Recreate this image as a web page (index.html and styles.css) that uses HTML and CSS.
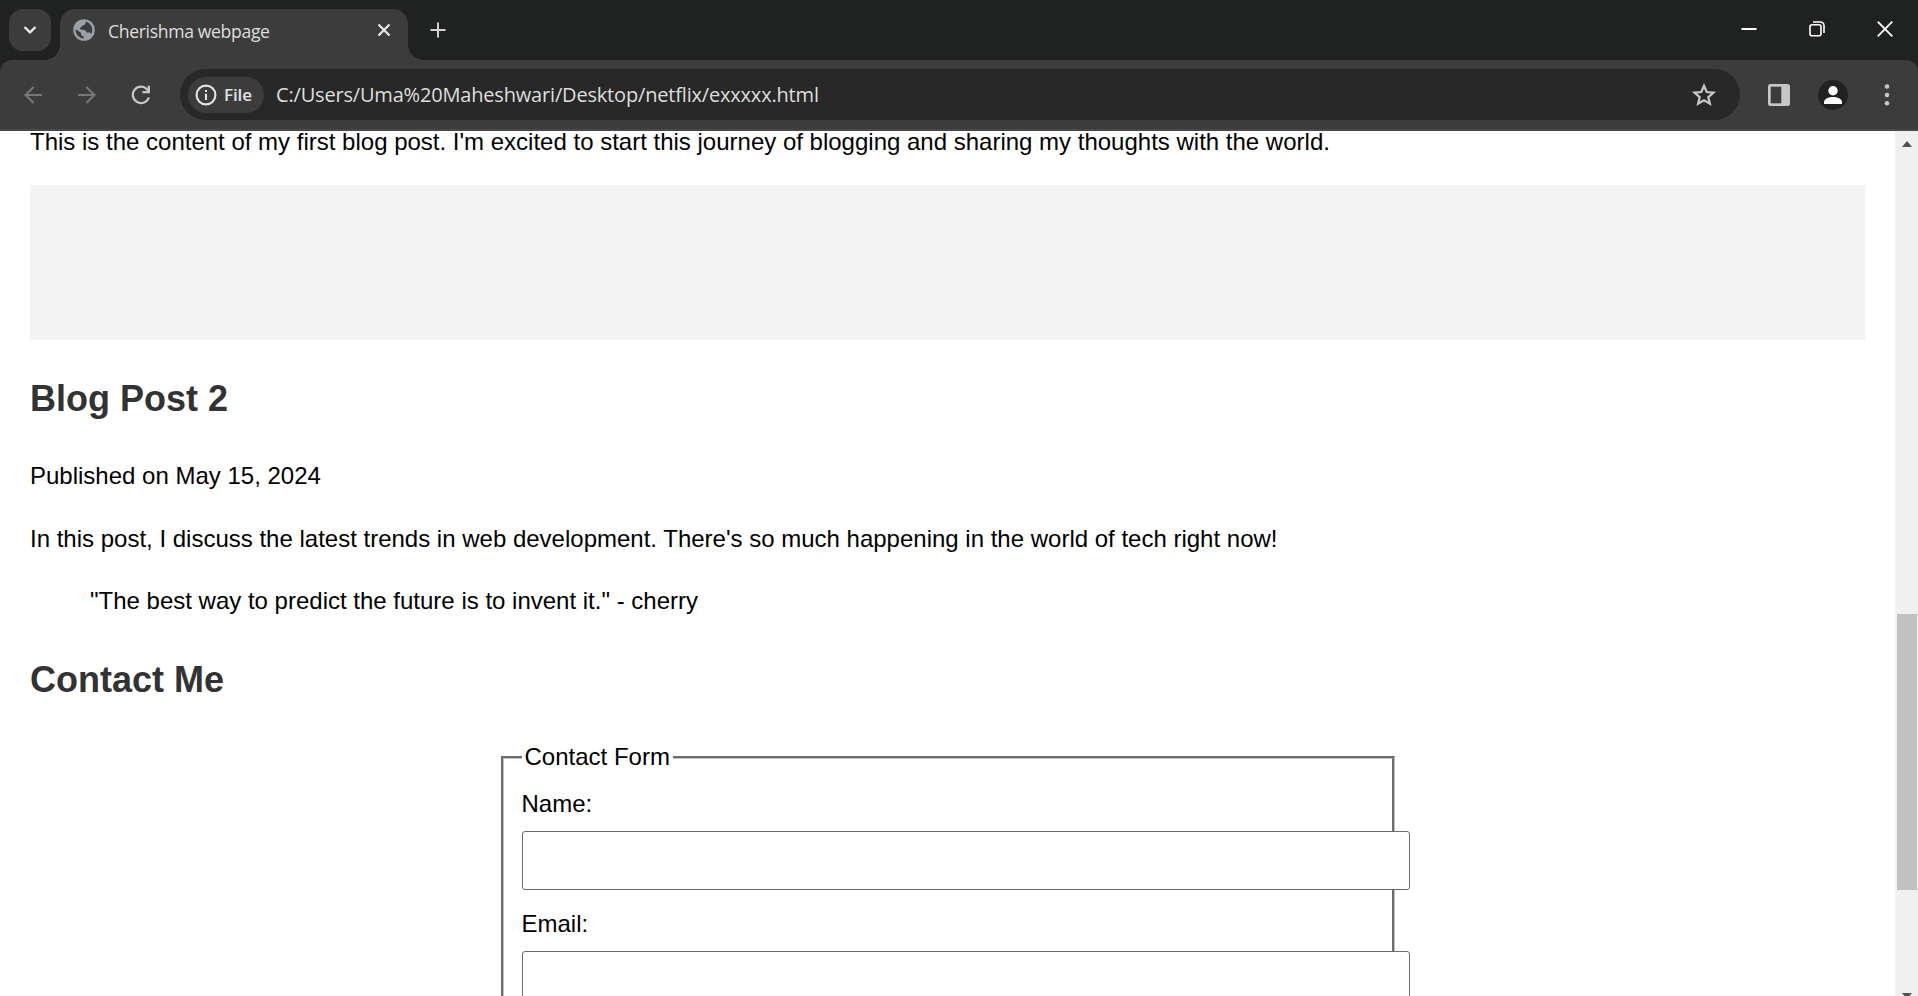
FILE: index.html
```html
<!DOCTYPE html>
<html lang="en">
<head>
<meta charset="utf-8">
<title>Cherishma webpage</title>
<link rel="stylesheet" href="styles.css">
</head>
<body>
<header class="tabbar">
  <button class="tab-search" aria-label="Search tabs"><svg width="14" height="10" viewBox="0 0 14 10"><path d="M1.5 2 7 7.4 12.5 2" fill="none" stroke="#e8e8e8" stroke-width="2.4"/></svg></button>
  <div class="tab">
    <svg class="globe" width="22" height="22" viewBox="0 0 22 22"><circle cx="11" cy="11" r="10.8" fill="#9aa0a6"/><path d="M13 2.6C12.6 5 12 6.2 9.8 6.4 8.4 6.5 8.6 8.8 6.8 9c0 1.6 1.2 1.9 4 1.9 2 0 2.5 1.2 2.5 2.6h2.6c1 0 1.8.7 2.1 1.6A8.5 8.5 0 0 0 13 2.6ZM2.6 10.2A8.5 8.5 0 0 0 10.6 19.5V17.2C8.9 17.2 8 16.4 8 15v-1.2Z" fill="#3c3c3c"/></svg>
    <span class="tab-title">Cherishma webpage</span>
    <svg class="tab-close" width="14" height="14" viewBox="0 0 14 14"><path d="m1.5 1.5 11 11m0-11-11 11" stroke="#e8e8e8" stroke-width="2.2"/></svg>
  </div>
  <svg class="new-tab" width="16" height="16" viewBox="0 0 16 16"><path d="M8 .5v15M.5 8h15" stroke="#d0d0d0" stroke-width="2"/></svg>
  <div class="window-controls">
    <svg width="16" height="16" viewBox="0 0 16 16"><path d="M.5 8h15" stroke="#fff" stroke-width="2"/></svg>
    <svg width="16" height="16" viewBox="0 0 16 16" fill="none" stroke="#fff" stroke-width="1.6"><rect x="1" y="3.8" width="11" height="11" rx="2"/><path d="M4 1h7.5a3.5 3.5 0 0 1 3.5 3.5V12"/></svg>
    <svg width="16" height="16" viewBox="0 0 16 16"><path d="m.7.7 14.6 14.6m0-14.6L.7 15.3" stroke="#fff" stroke-width="1.8"/></svg>
  </div>
</header>
<div class="toolbar-wrap">
<nav class="toolbar">
  <svg class="back" width="18" height="18" viewBox="0 0 18 18" fill="none" stroke="#777" stroke-width="2.2"><path d="M18 9H2M9.6 1 1.6 9l8 8"/></svg>
  <svg class="forward" width="18" height="18" viewBox="0 0 18 18" fill="none" stroke="#777" stroke-width="2.2"><path d="M0 9h16M8.4 1l8 8-8 8"/></svg>
  <svg class="reload" width="20" height="20" viewBox="0 0 20 20"><path d="M17.8 12.5A8.2 8.2 0 1 1 16 4.2L18 6.5" fill="none" stroke="#c7c7c7" stroke-width="2.3"/><path d="M19 .7V8.2h-7.6V6h5.2V.7Z" fill="#c7c7c7"/></svg>
  <div class="omnibox">
    <div class="chip"><svg width="22" height="22" viewBox="0 0 22 22"><circle cx="11" cy="11" r="9.4" fill="none" stroke="#e3e3e3" stroke-width="2.1"/><path d="M11 9.8V16M11 6v2.1" stroke="#e3e3e3" stroke-width="2.1"/></svg><span class="chip-text">File</span></div>
    <span class="url">C:/Users/Uma%20Maheshwari/Desktop/netflix/exxxxx.html</span>
    <svg class="star" width="26" height="26" viewBox="0 0 26 26"><path d="m13 3.8 2.7 6.2 6.8.6-5.2 4.5 1.6 6.6-5.9-3.5-5.9 3.5 1.6-6.6-5.2-4.5 6.8-.6Z" fill="none" stroke="#c7c7c7" stroke-width="2.2"/></svg>
  </div>
  <svg class="panel" width="22" height="22" viewBox="0 0 22 22"><rect width="22" height="22" rx="2.5" fill="#c7c7c7"/><path d="M2.7 2.7h10.6v16.6H2.7Z" fill="#3c3c3c"/></svg>
  <svg class="profile" width="30" height="30" viewBox="0 0 30 30"><circle cx="15" cy="15" r="15" fill="#202221"/><circle cx="15" cy="10.7" r="4.7" fill="#fff"/><path d="M6 24v-1.8c0-3.5 5-5.2 9-5.2s9 1.7 9 5.2V24Z" fill="#fff"/></svg>
  <svg class="menu" width="6" height="24" viewBox="0 0 6 24" fill="#c7c7c7"><circle cx="3" cy="3.5" r="2.3"/><circle cx="3" cy="12" r="2.3"/><circle cx="3" cy="20.3" r="2.3"/></svg>
</nav>
</div>
<div class="viewport">
  <main class="page">
    <p class="first">This is the content of my first blog post. I'm excited to start this journey of blogging and sharing my thoughts with the world.</p>
    <div class="banner"></div>
    <h2>Blog Post 2</h2>
    <p>Published on May 15, 2024</p>
    <p>In this post, I discuss the latest trends in web development. There's so much happening in the world of tech right now!</p>
    <blockquote>"The best way to predict the future is to invent it." - cherry</blockquote>
    <h2 class="contact-title">Contact Me</h2>
    <form class="contact">
      <fieldset>
        <legend>Contact Form</legend>
        <label for="name">Name:</label>
        <input id="name" type="text">
        <label for="email">Email:</label>
        <input id="email" type="email">
      </fieldset>
    </form>
  </main>
  <aside class="scrollbar">
    <svg width="10" height="6" viewBox="0 0 10 6"><path d="M5 0 10 6H0Z" fill="#505050"/></svg>
    <div class="thumb"></div>
    <svg width="10" height="6" viewBox="0 0 10 6"><path d="M0 0h10L5 6Z" fill="#505050"/></svg>
  </aside>
</div>
</body>
</html>
```
FILE: styles.css
```css
* { box-sizing: border-box; }
html, body { height: 100%; }
body { margin: 0; overflow: hidden; display: flex; flex-direction: column; background: #fff; }
svg { display: block; flex: none; }
button { border: 0; padding: 0; }

.tabbar { height: 60px; flex: none; display: flex; align-items: flex-start; background: #202221; font-family: "Open Sans", "Noto Sans", sans-serif; }
.tab-search { width: 42px; height: 42px; margin: 9px 9px 0; border-radius: 14px; background: #3c3c3c; display: flex; align-items: center; justify-content: center; }
.tab { position: relative; width: 348px; height: 51px; margin-top: 9px; padding: 0 17px 9px 13px; border-radius: 15px 15px 0 0; background: #3c3c3c; display: flex; align-items: center; }
.tab::before, .tab::after { content: ""; position: absolute; bottom: 0; width: 15px; height: 15px; }
.tab::before { right: 100%; background: radial-gradient(circle at 0 0, transparent 14.5px, #3c3c3c 15px); }
.tab::after { left: 100%; background: radial-gradient(circle at 100% 0, transparent 14.5px, #3c3c3c 15px); }
.tab-title { margin: 2px 0 0 13px; font-size: 17.6px; letter-spacing: -.34px; line-height: 24px; color: #dedede; white-space: nowrap; }
.tab-close { margin-left: auto; }
.new-tab { margin: 22px 0 0 22px; }
.window-controls { margin: 21px 25px 0 auto; display: flex; gap: 52px; }

.toolbar-wrap { flex: none; background: #202221; }
.toolbar { height: 71px; padding: 0 28px 2px 24px; display: flex; align-items: center; background: #3c3c3c; border-radius: 12px 12px 0 0; box-shadow: inset 0 -2px #484848; font-family: "Open Sans", "Noto Sans", sans-serif; }
.forward { margin-left: 36px; }
.reload { margin-left: 35px; }
.omnibox { width: 1560px; height: 51px; margin-left: 29px; padding: 0 23px 0 8px; border-radius: 26px; background: #282828; display: flex; align-items: center; }
.chip { width: 76px; height: 36px; padding-left: 6.5px; border-radius: 18px; background: #3c3c3c; display: flex; align-items: center; gap: 7.5px; }
.chip-text { font-size: 17px; font-weight: 600; letter-spacing: -.1px; color: #e3e3e3; }
.url { margin-left: 12px; font-size: 20px; letter-spacing: -.18px; color: #dedede; white-space: nowrap; }
.star { margin-left: auto; }
.panel { margin-left: 28px; }
.profile { margin-left: 28px; }
.menu { margin-left: 36px; }

.viewport { flex: 1; min-height: 0; overflow: hidden; display: flex; }
.page { flex: 1; height: 865px; overflow: hidden; padding: 0 30px; font: 24px/1.6 "Liberation Sans", Arial, sans-serif; color: #000; }
.page p { margin: 24px 0; }
.page .first { margin: 0 0 32px; line-height: 22px; }
.banner { height: 155px; background: #f4f4f4; }
h2 { margin: 29.88px 0; font-size: 36px; color: #333; }
.contact-title { margin: 30.6px 0 29.2px; }
blockquote { margin: 24px 60px; }
.contact { width: 894px; margin: 0 auto; }
fieldset { min-width: 0; height: 400px; margin: 0; border: 3px groove #c0c0c0; padding: 8.6px 18px 15px; }
legend { padding: 0 3px; }
label { display: block; margin-bottom: 8px; }
input { display: block; width: 888px; height: 59px; margin: 0 0 14.6px; border: 1px solid #6b6b6b; border-radius: 3px; background: #fff; }

.scrollbar { width: 23px; padding-top: 10px; background: #f0f0f0; display: flex; flex-direction: column; align-items: center; flex: none; }
.thumb { width: 20px; height: 276px; margin: 467px 0 103px; background: #c1c1c1; flex: none; }
```
